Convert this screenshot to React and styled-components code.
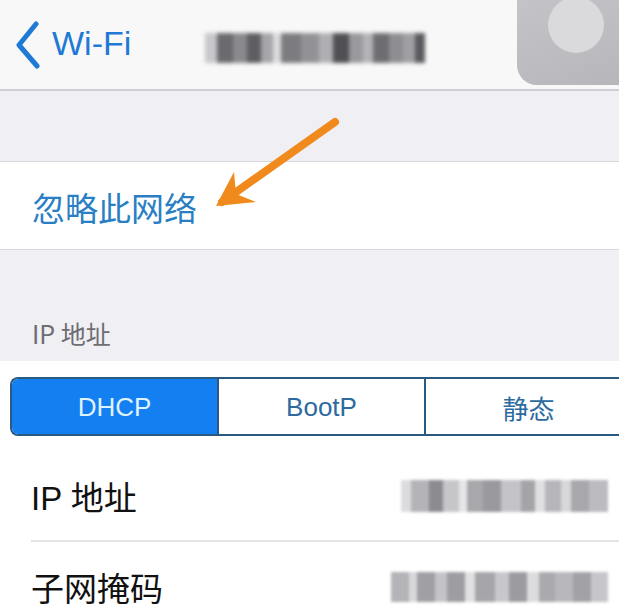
import styled, { createGlobalStyle } from "styled-components";

const GlobalStyle = createGlobalStyle`
    html, body {
        margin: 0;
        padding: 0;
        background: #efeff4;
        overflow: hidden;
    }
    body {
        font-family: "Liberation Sans", "Noto Sans CJK SC", sans-serif;
    }
`;

// blurred values, drawn as blocks of grey
const titleBlocks = [
    ["#c8c8cc", 12], ["#6a6a6e", 16], ["#8a8a8e", 14], ["#5e5e62", 14], ["#a6a6aa", 12],
    ["#dcdcde", 8], ["#7c7c80", 20], ["#929296", 18], ["#b0b0b4", 14], ["#505054", 16],
    ["#9a9a9e", 14], ["#b4b4b8", 10], ["#6e6e72", 16], ["#8e8e92", 14], ["#a0a0a4", 12], ["#5a5a5e", 10],
];

const ipBlocks = [
    ["#dcdcde", 10], ["#b4b4b8", 18], ["#8c8c90", 14], ["#c6c6ca", 16], ["#e6e6e8", 8], ["#a8a8ac", 16],
    ["#9a9a9e", 18], ["#c4c4c8", 20], ["#a4a4a8", 14], ["#e0e0e2", 10], ["#b6b6ba", 16], ["#d8d8da", 10],
    ["#a8a8ac", 18], ["#bcbcc0", 19],
];

const maskBlocks = [
    ["#b4b4b8", 18], ["#d8d8da", 8], ["#a0a0a4", 18], ["#c4c4c8", 12], ["#9e9ea2", 18], ["#e0e0e2", 10],
    ["#a6a6aa", 20], ["#c8c8cc", 14], ["#9c9ca0", 18], ["#dcdcde", 12], ["#aaaaae", 16], ["#b8b8bc", 18],
    ["#a2a2a6", 18], ["#c6c6ca", 17],
];

const Blur = ({ blocks, height }) => (
    <BlurRow $height={height}>
        {blocks.map(([color, w], i) => (
            <Block key={i} style={{ background: color, width: w }} />
        ))}
    </BlurRow>
);

const App = () => {
    return (
        <Screen>
            <GlobalStyle />
            <NavBar>
                <BackButton>
                    <svg width="26" height="48" viewBox="0 0 26 48">
                        <path d="M22 3 L5 24 L23 45" fill="none" stroke="#1f7ad6" strokeWidth="5" strokeLinecap="round" strokeLinejoin="round" />
                    </svg>
                    <span>Wi-Fi</span>
                </BackButton>
                <Title>
                    <Blur blocks={titleBlocks} height={30} />
                </Title>
                <TouchButton />
            </NavBar>

            <Spacer $height={70} />

            <Cell>
                <ForgetLabel>忽略此网络</ForgetLabel>
                <Arrow width="140" height="100" viewBox="0 0 140 100">
                    <path d="M125 8 L12 88" stroke="#f08a1c" strokeWidth="8" strokeLinecap="round" />
                    <path d="M24 58 L6 92 L46 88 L26 80 Z" fill="#f08a1c" />
                </Arrow>
            </Cell>

            <SectionHeader>IP 地址</SectionHeader>

            <Group>
                <SegmentBar>
                    <Segment $active>
                        <span>DHCP</span>
                    </Segment>
                    <Segment>
                        <span>BootP</span>
                    </Segment>
                    <Segment>
                        <span>静态</span>
                    </Segment>
                </SegmentBar>

                <Row>
                    <RowLabel>IP 地址</RowLabel>
                    <Blur blocks={ipBlocks} height={32} />
                </Row>
                <Row $last>
                    <RowLabel>子网掩码</RowLabel>
                    <Blur blocks={maskBlocks} height={30} />
                </Row>
            </Group>
        </Screen>
    );
};

const Screen = styled.div`
    width: 619px;
    height: 615px;
    overflow: hidden;
    background: #efeff4;
`;

const NavBar = styled.div`
    position: relative;
    height: 89px;
    display: flex;
    align-items: center;
    background: #f8f8f9;
    border-bottom: 2px solid #cfcfd3;
    padding: 0 0 0 14px;
    box-sizing: content-box;
`;

const BackButton = styled.div`
    display: flex;
    align-items: center;
    gap: 12px;
    color: #1f7ad6;
    font-size: 34px;

    span {
        margin-top: -2px;
    }
`;

const Title = styled.div`
    margin-left: 74px;
    margin-top: 6px;
    filter: blur(1.4px);
`;

const BlurRow = styled.div`
    display: flex;
    height: ${(p) => p.$height}px;
    filter: blur(1.5px);
`;

const Block = styled.div`
    height: 100%;
`;

const TouchButton = styled.div`
    position: absolute;
    top: -20px;
    left: 517px;
    width: 125px;
    height: 105px;
    border-radius: 20px;
    background: linear-gradient(160deg, #c6c6ca, #b6b6ba);

    &::after {
        content: "";
        position: absolute;
        left: 31px;
        top: 17px;
        width: 56px;
        height: 56px;
        border-radius: 50%;
        background: #dadadd;
    }
`;

const Spacer = styled.div`
    height: ${(p) => p.$height}px;
`;

const Cell = styled.div`
    position: relative;
    height: 87px;
    display: flex;
    align-items: center;
    padding-left: 32px;
    background: #ffffff;
    border-top: 1px solid #d8d8dc;
    border-bottom: 1px solid #d8d8dc;
`;

const ForgetLabel = styled.span`
    font-family: "Noto Sans CJK SC", sans-serif;
    font-size: 33px;
    color: #2a7fc4;
    margin-top: 2px;
`;

const Arrow = styled.svg`
    position: absolute;
    left: 210px;
    top: -48px;
    overflow: visible;
`;

const SectionHeader = styled.div`
    height: 111px;
    box-sizing: border-box;
    padding: 68px 0 0 32px;
    font-family: "Noto Sans CJK SC", sans-serif;
    font-size: 25px;
    color: #6d6d72;
    line-height: 1.2;
`;

const Group = styled.div`
    background: #ffffff;
    padding-top: 16px;
`;

const SegmentBar = styled.div`
    display: grid;
    grid-template-columns: 205px 207px 1fr;
    margin-left: 10px;
    width: 640px;
    height: 59px;
    box-sizing: border-box;
    border: 2px solid #2b5a80;
    border-right: none;
    border-radius: 8px 0 0 8px;
    overflow: hidden;
`;

const Segment = styled.div`
    display: flex;
    align-items: center;
    background: ${(p) => (p.$active ? "#147ff0" : "#ffffff")};
    color: ${(p) => (p.$active ? "#dff2ff" : "#2c6aa0")};
    font-family: "Liberation Sans", "Noto Sans CJK SC", sans-serif;
    font-size: 26px;

    & + & {
        border-left: 2px solid #2b5a80;
    }

    span {
        width: 205px;
        text-align: center;
        margin-top: 1px;
    }
`;

const Row = styled.div`
    display: flex;
    align-items: center;
    justify-content: space-between;
    height: 89px;
    margin-left: 31px;
    padding-right: 11px;
    border-bottom: ${(p) => (p.$last ? "none" : "2px solid #e4e4e6")};
    margin-top: ${(p) => (p.$last ? "0" : "15px")};
`;

const RowLabel = styled.span`
    font-family: "Liberation Sans", "Noto Sans CJK SC", sans-serif;
    font-size: 33px;
    color: #111111;
`;

export default App;
